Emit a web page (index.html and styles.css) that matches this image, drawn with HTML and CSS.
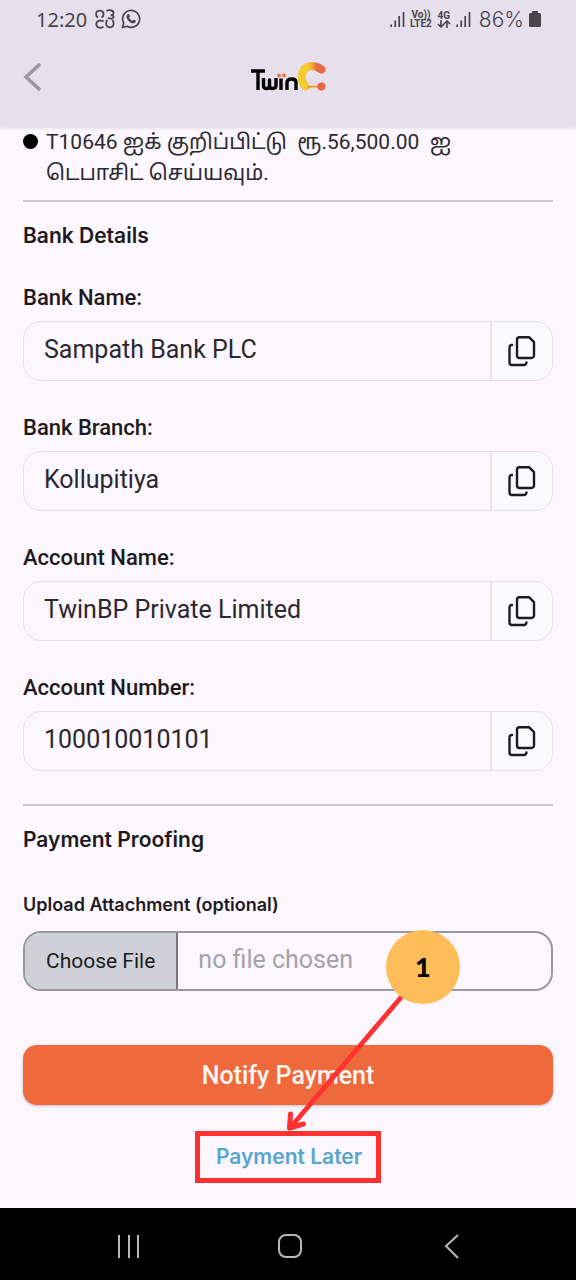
FILE: index.html
```html
<!DOCTYPE html>
<html lang="ta">
<head>
<meta charset="utf-8">
<meta name="viewport" content="width=device-width, initial-scale=1">
<title>TwinC Payment</title>
<link rel="stylesheet" href="styles.css">
</head>
<body>
<svg class="defs" width="0" height="0" aria-hidden="true">
  <symbol id="copy" viewBox="0 0 28 32">
    <path d="M11.500 2.200H21L26 7.200v13.300a2.500 2.500 0 0 1-2.500 2.500h-12A2.500 2.500 0 0 1 9 20.500V4.700a2.500 2.500 0 0 1 2.500-2.500ZM4 10a2.500 2.500 0 0 0-2.500 2.500v15A2.500 2.500 0 0 0 4 30h12q2 0 2.500-2.500" fill="none" stroke="currentColor" stroke-width="2.400" stroke-linecap="round" stroke-linejoin="round"/>
  </symbol>
  <symbol id="signal" viewBox="0 0 15 17">
    <path d="M1.200 13.500v2.500M5.200 9.500v6.500M9.200 5v11M13.500 1v15" fill="none" stroke="currentColor" stroke-width="1.700"/>
  </symbol>
</svg>
<header class="top">
  <div class="status">
    <div class="status-group">
      <span class="clock">12:20</span>
      <svg class="status-icon" viewBox="0 0 20 20" fill="none" stroke="currentColor" stroke-width="1.800" aria-hidden="true">
        <path d="M3 8.500C1 7.500 1 5 1.300 3.800 2 1 7.500 1 8.300 3.800c.4 1.500.2 3.700-1.800 4.700M11.500 2C13 1 18 .5 18.500 3.500c.3 1.700-1 2.500-2.700 2.500 2 .2 3 1 2.700 2.500-.5 1.500-4 1.300-5.500.2M8.500 12.500C7 11 1.500 11 1.300 15c-.2 4.500 5.500 4.500 7.200 2.500M12.500 11c-1.300 1-1.500 3-1.200 4.700.7 3.600 6.500 3.600 7.200 0 .3-1.700 0-3.700-1.300-4.700"/>
      </svg>
      <svg class="status-icon" viewBox="0 0 20 20" aria-hidden="true">
        <path d="M1.500 18.500 2.700 14a8.500 8.500 0 1 1 3.300 3.300Z" fill="none" stroke="currentColor" stroke-width="1.700" stroke-linejoin="round"/>
        <path d="M6.700 5.200c.7-.6 1.300-.2 1.600.5l.6 1.500c.2.600-.8 1.200-.7 1.600.6 1.400 1.700 2.300 3 2.900.6.100 1.100-1.200 1.600-1l1.700.9c1 .5-.2 2.600-1.700 2.700C9.400 14.600 5.600 10.700 5.500 7.500c0-1 .6-1.800 1.200-2.300Z" fill="currentColor"/>
      </svg>
    </div>
    <div class="status-group status-right">
      <svg class="signal"><use href="#signal"/></svg>
      <span class="tiny"><span>Vo))</span><span>LTE2</span></span>
      <span class="tiny"><span>4G</span>
        <svg class="arrows" viewBox="0 0 14 8" fill="none" stroke="currentColor" stroke-width="1.600" aria-hidden="true"><path d="M4 0v7M1 4l3 3 3-3M10 8V1M7 4l3-3 3 3"/></svg>
      </span>
      <svg class="signal"><use href="#signal"/></svg>
      <span class="battery-text">86%</span>
      <svg class="battery" viewBox="0 0 12 16" aria-hidden="true"><path d="M3 0h6v2h1.500A1.500 1.500 0 0 1 12 3.500v11a1.500 1.500 0 0 1-1.500 1.500h-9A1.500 1.500 0 0 1 0 14.500v-11A1.500 1.500 0 0 1 1.500 2H3Z" fill="currentColor"/></svg>
    </div>
  </div>
  <div class="appbar">
    <button class="back" type="button" aria-label="Back">
      <svg viewBox="0 0 18 30" aria-hidden="true"><path d="M17 2 3 15l14 13" fill="none" stroke="currentColor" stroke-width="3.500"/></svg>
    </button>
    <svg class="logo" viewBox="0 0 76 30" role="img" aria-label="TwinC">
      <defs><linearGradient id="flame" x1="0" x2="1"><stop offset="0.300" stop-color="#f3cc2f"/><stop offset="0.550" stop-color="#f3a13c"/><stop offset="0.750" stop-color="#ea6a42"/></linearGradient></defs>
      <g fill="none" stroke="#050505" stroke-width="3.400" stroke-linejoin="round">
        <path d="M1 9h14M8 9v19"/>
        <path d="M13.500 16v7.500q0 3 3 3t3-3V18v5.500q0 3 3.200 3t3.300-3V16M31 16.500V28M37 28v-7.500q0-3.500 4.500-3.500t4.500 3.500V28"/>
      </g>
      <g fill="#ed7045"><circle cx="29" cy="13.500" r="1.900"/><circle cx="34" cy="13.500" r="1.900"/></g>
      <path d="M71.500 7.500C65 2.500 56 2.500 53 9.500c-2 5-1.500 11 2.500 15" fill="none" stroke="url(#flame)" stroke-width="8" stroke-linecap="round"/>
      <path d="M57 25.500q6-2 13 0" fill="none" stroke="#f2a23c" stroke-width="2"/>
      <circle cx="71.500" cy="24.500" r="4" fill="#e96542"/>
    </svg>
  </div>
</header>
<main class="content">
  <ul class="notes">
    <li>T10646 ஐக் குறிப்பிட்டு&nbsp; ரூ.56,500.00&nbsp; ஐ டெபாசிட் செய்யவும்.</li>
  </ul>
  <section class="section">
    <h2>Bank Details</h2>
    <div class="fields">
      <div class="field">
        <label for="bank">Bank Name:</label>
        <div class="box"><input id="bank" type="text" value="Sampath Bank PLC" readonly><button type="button" aria-label="Copy bank name"><svg><use href="#copy"/></svg></button></div>
      </div>
      <div class="field">
        <label for="branch">Bank Branch:</label>
        <div class="box"><input id="branch" type="text" value="Kollupitiya" readonly><button type="button" aria-label="Copy bank branch"><svg><use href="#copy"/></svg></button></div>
      </div>
      <div class="field">
        <label for="account">Account Name:</label>
        <div class="box"><input id="account" type="text" value="TwinBP Private Limited" readonly><button type="button" aria-label="Copy account name"><svg><use href="#copy"/></svg></button></div>
      </div>
      <div class="field">
        <label for="number">Account Number:</label>
        <div class="box"><input id="number" type="text" value="100010010101" readonly><button type="button" aria-label="Copy account number"><svg><use href="#copy"/></svg></button></div>
      </div>
    </div>
  </section>
  <section class="section proof">
    <h2>Payment Proofing</h2>
    <label class="upload-label" for="proof">Upload Attachment (optional)</label>
    <div class="upload">
      <span class="choose">Choose File</span>
      <span class="filename">no file chosen</span>
      <input id="proof" type="file">
    </div>
  </section>
  <button class="notify" type="button">Notify Payment</button>
  <div class="highlight">
    <a class="later" href="#later">Payment Later</a>
    <div class="callout">
      <svg viewBox="0 0 181 206" aria-hidden="true"><path d="M124 65 11 198M11.500 184l-1 14 14-4" fill="none" stroke="#ff3131" stroke-width="5" stroke-linecap="round" stroke-linejoin="round"/></svg>
      <span class="step">1</span>
    </div>
  </div>
</main>
<nav class="system" aria-label="System navigation">
  <button type="button" aria-label="Recent apps"><svg viewBox="0 0 26 26"><path d="M3 2v23M13 2v23M22 2v23"/></svg></button>
  <button type="button" aria-label="Home"><svg viewBox="0 0 26 26"><rect x="2" y="2" width="22" height="22" rx="7"/></svg></button>
  <button type="button" aria-label="Back"><svg viewBox="0 0 26 26"><path d="M19 2 7 13l12 12"/></svg></button>
</nav>
</body>
</html>
```
FILE: styles.css
```css
* { box-sizing: border-box; }
body {
  margin: 0;
  min-height: 100vh;
  display: flex;
  flex-direction: column;
  background: #fcf6fe;
  color: #1d1b20;
  font-family: Roboto, "Noto Sans", "Noto Sans Tamil", sans-serif;
}
button { border: 0; background: none; padding: 0; color: inherit; font: inherit; }
svg { display: block; }
.defs { position: absolute; }

.top {
  padding-bottom: 11px;
  background: #e6dfec;
  box-shadow: 0 1px 3px #dcd8de;
}
.status {
  height: 38px;
  padding: 0 35px 0 36px;
  display: flex;
  align-items: center;
  justify-content: space-between;
  color: #49454d;
}
.status-group { display: flex; align-items: center; gap: 6px; }
.status-right { gap: 5px; }
.clock { font-size: 20px; margin-right: 2px; font-family: "Noto Sans", sans-serif; }
.status-icon { width: 20px; height: 20px; }
.signal { width: 15px; height: 17px; }
.tiny {
  display: flex;
  flex-direction: column;
  align-items: center;
  font-family: Roboto, sans-serif;
  font-size: 10px;
  font-weight: 700;
  line-height: 9px;
}
.arrows { width: 14px; height: 8px; }
.battery-text { font-family: Inter, sans-serif; font-size: 21px; font-weight: 300; margin-left: 3px; }
.battery { width: 12px; height: 16px; }
.appbar {
  height: 78px;
  padding: 0 23px;
  display: grid;
  grid-template-columns: 1fr auto 1fr;
  align-items: center;
}
.back { justify-self: start; color: #9b979e; }
.back svg { width: 18px; height: 30px; }
.logo { width: 76px; height: 30px; }

.content { flex: 1; padding: 0 23px 25px; }
.notes {
  margin: 0 0 11px;
  padding: 0;
  list-style: none;
  font-size: 21px;
  line-height: 31px;
  color: #2b292e;
}
.notes li { display: flex; padding-right: 64px; gap: 8px; }
.notes li::before {
  content: "";
  flex: none;
  width: 15px;
  height: 15px;
  margin-top: 7px;
  border-radius: 50%;
  background: #000;
}
.section { border-top: 2px solid #cdc9cf; padding-top: 20px; }
h2 { margin: 0; font: 600 21px/28px Inter, sans-serif; }
.fields { margin-top: 36px; display: grid; gap: 35px; }
.field { display: grid; gap: 11px; }
.field label { font-size: 22px; font-weight: 500; line-height: 24px; }
.box {
  height: 60px;
  display: flex;
  border: 1px solid #e6e1e8;
  border-radius: 18px;
  overflow: hidden;
}
.box input {
  flex: 1;
  min-width: 0;
  border: 0;
  padding: 0 20px 4px;
  background: none;
  color: #2b292e;
  font: 400 25px Roboto, sans-serif;
}
.box button {
  width: 62px;
  display: grid;
  place-items: center;
  border-left: 2px solid #e9e6ea;
  background: #faf9fc;
}
.box svg { width: 28px; height: 32px; }
.proof { margin-top: 33px; }
.upload-label { display: block; margin: 39px 0 14px; font: 600 18px/24px Inter, sans-serif; }
.upload {
  position: relative;
  display: flex;
  height: 60px;
  border: 2px solid #9a979d;
  border-radius: 18px;
  overflow: hidden;
}
.choose {
  padding: 0 21px;
  line-height: 56px;
  font-size: 21px;
  background: #ced1d8;
  border-right: 2px solid #79797f;
}
.filename { padding-left: 20px; font-size: 25px; line-height: 53px; color: #a5a2a8; }
.upload input { position: absolute; inset: 0; width: 100%; opacity: 0; }
.notify {
  display: block;
  width: 100%;
  height: 60px;
  margin-top: 54px;
  border-radius: 14px;
  background: #ee693c;
  color: #fff6f3;
  font-size: 25px;
  font-weight: 500;
  box-shadow: 0 1px 3px #c9bec8;
}
.highlight {
  position: relative;
  width: fit-content;
  margin: 26px auto 0;
  border: 5px solid #ff3131;
}
.later {
  display: block;
  padding: 0 14px 0 16px;
  font: 600 21px/42px Inter, sans-serif;
  color: #58a6cd;
  text-decoration: none;
}
.callout {
  position: absolute;
  left: 79px;
  bottom: 100%;
  width: 181px;
  height: 206px;
  pointer-events: none;
}
.step {
  position: absolute;
  top: 0;
  right: 0;
  width: 74px;
  height: 74px;
  border-radius: 50%;
  background: #ffbd59;
  color: #000;
  text-align: center;
  font: 900 27px/74px Lato, sans-serif;
}
.system {
  height: 72px;
  padding: 4px 43px 0 48px;
  display: grid;
  grid-template-columns: repeat(3, 1fr);
  background: #000;
}
.system button { display: grid; place-items: center; }
.system svg { width: 26px; height: 26px; fill: none; stroke: #b9b7bb; stroke-width: 2; }
```
